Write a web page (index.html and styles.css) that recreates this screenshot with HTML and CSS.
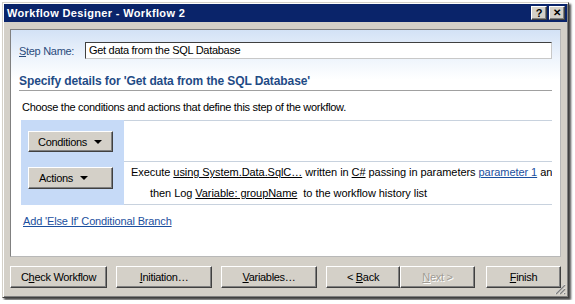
FILE: index.html
```html
<!DOCTYPE html>
<html>
<head>
<meta charset="utf-8">
<link rel="stylesheet" href="styles.css">
</head>
<body>
<div class="window">
  <div class="titlebar">
    <span class="title">Workflow Designer - Workflow 2</span>
    <div class="tb-buttons">
      <span class="tb-btn">?</span>
      <span class="tb-btn tb-close">✕</span>
    </div>
  </div>
  <div class="client">
    <div class="panel">
      <div class="step-row">
        <span class="step-label"><u>S</u>tep Name:</span>
        <div class="input">Get data from the SQL Database</div>
      </div>
      <div class="heading">Specify details for 'Get data from the SQL Database'</div>
      <div class="desc">Choose the conditions and actions that define this step of the workflow.</div>
      <div class="rules">
        <div class="rule-row row-cond">
          <div class="rule-side"><span class="btn drop btn-cond"><span>Conditions</span><i class="arrow"></i></span></div>
          <div class="rule-body"></div>
        </div>
        <div class="rule-row row-act">
          <div class="rule-side"><span class="btn drop btn-act"><span>Actions</span><i class="arrow"></i></span></div>
          <div class="rule-body last">
            <div class="line">Execute <span class="ul">using System.Data.SqlC…</span> written in <span class="ul">C#</span> passing in parameters <span class="lnk">parameter 1</span> and</div>
            <div class="line indent">then Log <span class="ul">Variable: groupName</span>&nbsp; to the workflow history list</div>
          </div>
        </div>
      </div>
      <div class="add-link"><span class="lnk">Add 'Else If' Conditional Branch</span></div>
    </div>
    <div class="buttons">
      <span class="btn b-check"><span>C<u>h</u>eck Workflow</span></span>
      <span class="btn b-init"><span><u>I</u>nitiation…</span></span>
      <span class="btn b-vars"><span><u>V</u>ariables…</span></span>
      <div class="nav">
        <span class="btn b-back"><span>&lt; <u>B</u>ack</span></span>
        <span class="btn b-next disabled"><span><u>N</u>ext &gt;</span></span>
      </div>
      <span class="btn b-finish"><span><u>F</u>inish</span></span>
    </div>
  </div>
  <svg class="grip" width="12" height="12" viewBox="0 0 12 12">
    <path d="M11 1 L1 11" stroke="#fff" stroke-width="1"/>
    <path d="M11 2 L2 11" stroke="#808080" stroke-width="1.4"/>
    <path d="M11 5 L5 11" stroke="#fff" stroke-width="1"/>
    <path d="M11 6 L6 11" stroke="#808080" stroke-width="1.4"/>
    <path d="M11 9 L9 11" stroke="#fff" stroke-width="1"/>
    <path d="M11 10 L10 11" stroke="#808080" stroke-width="1.4"/>
  </svg>
</div>
</body>
</html>
```

FILE: styles.css
```css
html, body {
  margin: 0;
  padding: 0;
  background: #ffffff;
}
body {
  padding: 2px;
  font-family: "Liberation Sans", Arial, sans-serif;
  font-size: 11px;
  letter-spacing: -0.3px;
  color: #000;
}
.window {
  position: relative;
  box-sizing: border-box;
  width: 567px;
  height: 296px;
  background: #d4d0c8;
  border: 1px solid;
  border-color: #d4d0c8 #404040 #404040 #d4d0c8;
  padding: 1px;
  box-shadow: inset 1px 1px 0 #fff, inset -1px -1px 0 #808080, 2px 2px 2px rgba(0,0,0,0.7);
  display: flex;
  flex-direction: column;
}
.titlebar {
  height: 18px;
  background: #0a246a;
  display: flex;
  align-items: center;
  justify-content: space-between;
  padding: 0 2px 0 3px;
}
.title {
  color: #fff;
  font-weight: bold;
  font-size: 11px;
  letter-spacing: 0.35px;
}
.tb-buttons {
  display: flex;
  gap: 2px;
}
.tb-btn {
  box-sizing: border-box;
  width: 16px;
  height: 14px;
  background: #d4d0c8;
  border: 1px solid;
  border-color: #fff #404040 #404040 #fff;
  box-shadow: inset -1px -1px 0 #808080;
  display: flex;
  align-items: center;
  justify-content: center;
  font-weight: bold;
  font-size: 11px;
  letter-spacing: 0;
  line-height: 1;
}
.tb-close {
  font-size: 10px;
}
.client {
  flex: 1;
  display: flex;
  flex-direction: column;
  padding: 7px 6px 0 6px;
}
.panel {
  box-sizing: border-box;
  height: 228px;
  border: 1px solid;
  border-color: #808080 #b8b8b8 #b8b8b8 #808080;
  background: linear-gradient(to bottom, #d3e2f6 0px, #eef4fc 28px, #ffffff 50px);
  display: flex;
  flex-direction: column;
}
.step-row {
  display: flex;
  align-items: center;
  margin-top: 12px;
  padding-left: 8px;
  height: 17px;
}
.step-label {
  width: 66px;
  color: #2a4c7c;
}
.input {
  box-sizing: border-box;
  width: 467px;
  height: 17px;
  background: #fff;
  border: 1px solid;
  border-color: #404040 #c8c8c8 #c8c8c8 #404040;
  padding: 0 3px;
  line-height: 15px;
}
.heading {
  margin: 14px 0 0 8px;
  width: 533px;
  line-height: 16px;
  padding-bottom: 1px;
  border-bottom: 1px solid #a0a0a0;
  font-weight: bold;
  font-size: 12px;
  letter-spacing: -0.1px;
  color: #1f4b86;
}
.desc {
  margin: 9px 0 0 11px;
  line-height: 14px;
}
.rules {
  margin: 6px 0 0 10px;
  width: 531px;
  display: flex;
  flex-direction: column;
}
.rule-row {
  display: flex;
}
.rule-side {
  box-sizing: border-box;
  width: 103px;
  background: #c6daf7;
  padding-left: 7px;
}
.row-cond .rule-side {
  padding-top: 11px;
  height: 41px;
}
.row-act .rule-side {
  padding-top: 6px;
  height: 44px;
}
.rule-body {
  flex: 1;
  min-width: 0;
  border-top: 1px solid #c8d2de;
  padding-left: 7px;
  overflow: hidden;
  white-space: nowrap;
  letter-spacing: -0.06px;
}
.rule-body.last {
  border-bottom: 1px solid #c8d2de;
}
.line {
  line-height: 21px;
}
.line.indent {
  padding-left: 19px;
}
.ul {
  text-decoration: underline;
}
.lnk {
  color: #1b4f9e;
  text-decoration: underline;
}
.add-link {
  margin: 9px 0 0 12px;
  line-height: 14px;
  letter-spacing: -0.15px;
}
.btn {
  box-sizing: border-box;
  display: flex;
  align-items: center;
  justify-content: center;
  background: #d4d0c8;
  border: 1px solid;
  border-color: #fff #404040 #404040 #fff;
  box-shadow: inset -1px -1px 0 #808080;
  height: 22px;
  white-space: pre;
}
.btn-cond {
  width: 85px;
  height: 21px;
}
.btn-act {
  width: 85px;
}
.drop {
  justify-content: flex-start;
}
.btn-cond { padding-left: 9px; }
.btn-act { padding-left: 10px; }
.arrow {
  display: inline-block;
  width: 0;
  height: 0;
  border-left: 4px solid transparent;
  border-right: 4px solid transparent;
  border-top: 4px solid #000;
  margin-left: 7px;
}
.buttons {
  display: flex;
  margin-top: 9px;
  gap: 9px;
}
.nav {
  display: flex;
}
.b-check { width: 97px; }
.b-init { width: 96px; }
.b-vars { width: 96px; }
.b-back { width: 74px; }
.b-next { width: 75px; }
.b-finish { width: 75px; margin-left: auto; }
.disabled {
  color: #a09c94;
  text-shadow: 1px 1px 0 #fff;
}
.grip {
  position: absolute;
  right: 2px;
  bottom: 2px;
}
```
